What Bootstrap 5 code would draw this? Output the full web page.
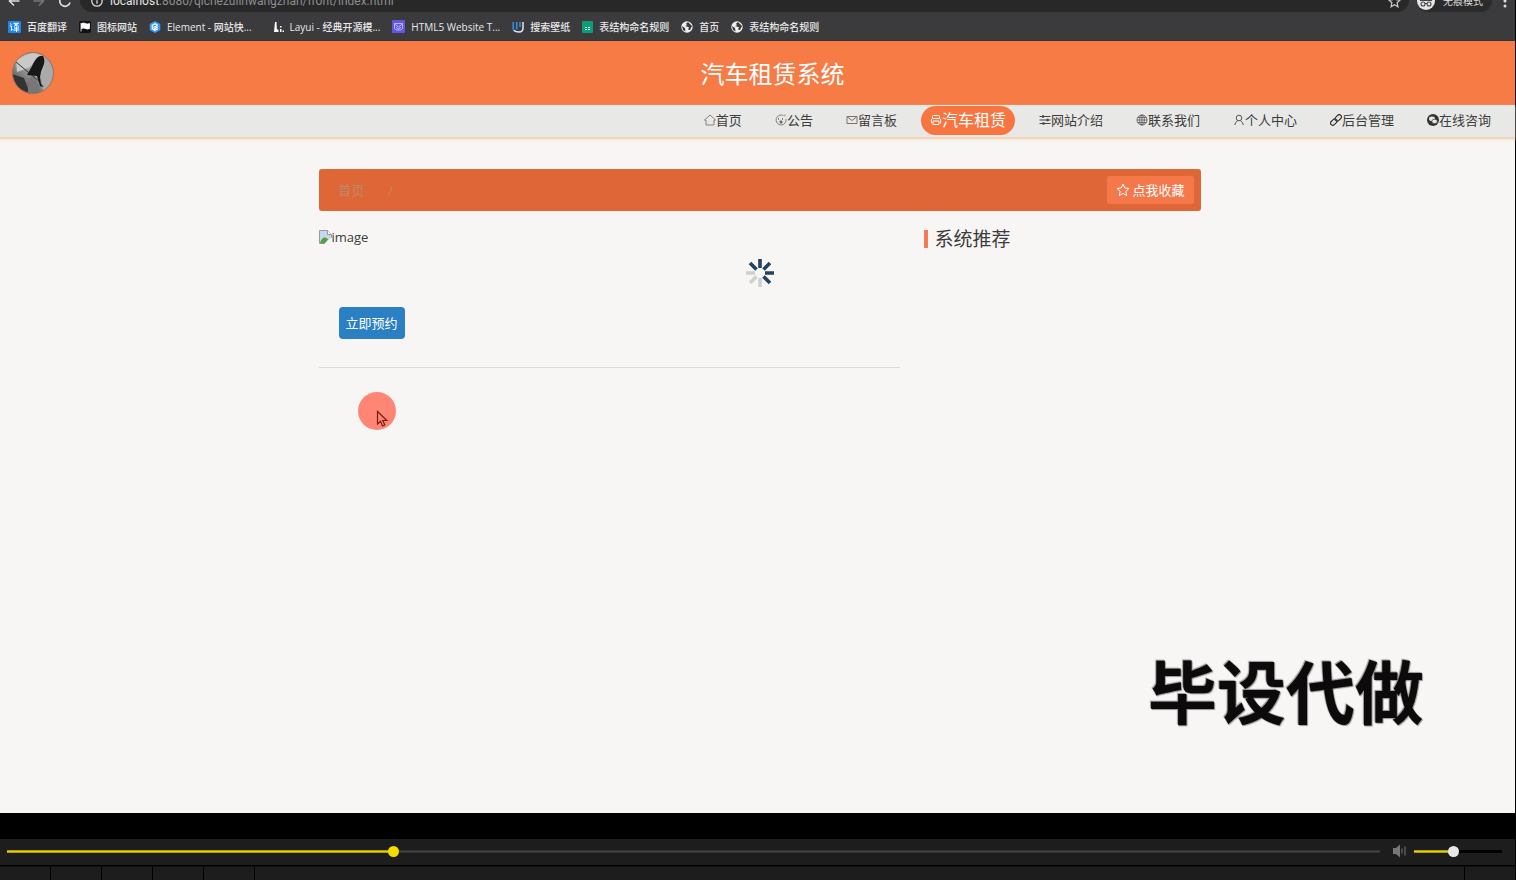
<!DOCTYPE html>
<html lang="zh-CN">
<head>
<meta charset="utf-8">
<meta name="viewport" content="width=device-width, initial-scale=1">
<title>汽车租赁系统</title>
<link href="https://cdn.jsdelivr.net/npm/bootstrap@5.3.0/dist/css/bootstrap.min.css" rel="stylesheet">
<style>
  body { font-family: "Open Sans", "Noto Sans CJK SC", sans-serif; font-size: 13px; line-height: 20px; background: #000; color: #3c3c3c; overflow: hidden; }
  a { color: inherit; text-decoration: none; }
  svg { display: block; flex: none; }
  button { font-family: inherit; }
  .screen { background: #f7f6f4; border-right: 1px solid #000; min-height: 0; }

  /* browser chrome */
  .toolbar { height: 12px; background: #3b3b3d; overflow: hidden; color: #dcdcdc; }
  .toolbar-row { height: 22px; flex: 1 1 auto; padding-left: 8px; }
  .toolbar-keys { gap: 13px; }
  .toolbar button { border: 0; padding: 0; background: none; color: inherit; }
  .toolbar .menu-key { margin: 0 8px 0 11px; }
  .address { background: #282829; border-radius: 0 0 12px 12px; padding: 0 8px 0 11px; height: 22px; font-family: Roboto, sans-serif; font-size: 12px; }
  .address input { background: none; border: 0; outline: 0; padding: 0; color: #8d8d8f; }
  .address-host { color: #e6e6e6; margin-left: 7px; }
  .incognito { background: #2b2b2c; border-radius: 11px; height: 22px; font-size: 10px; padding-right: 9px; }
  .bookmarks { height: 29px; background: #3b3b3d; border-bottom: 1px solid #333; color: #e8e8e8; font-size: 10px; font-weight: 500; padding: 1px 0 0 8px; gap: 12px; }
  .bookmarks a { gap: 6px; }

  /* site header */
  .site-head { height: 64px; background: #f67b45; padding-left: 12px; }
  .site-title { font-size: 24px; line-height: 32px; color: #fff; font-weight: 400; padding-top: 2px; }
  .site-nav { height: 34px; background: #e8e9e7; border-bottom: 2px solid #f2d4b7; padding: 0 15px 2px 0; gap: 15px; box-shadow: 0 1px 2px #f5e8da; }
  .site-nav a { padding: 0 9px; height: 29px; }
  .site-nav a.active { background: #f67540; color: #fff; font-size: 16px; border-radius: 15px; }

  /* content */
  .site-main { padding: 30px 0 0 4px; }
  .site-wrap { max-width: 882px; }
  .crumbs { background: #df6637; border-radius: 3px; padding: 0 7px 0 20px; height: 42px; color: #bc8a66; }
  .btn-fav { background: #f4784a; color: #fff; font-size: 13px; line-height: 20px; padding: 4px 9px; border-radius: 2px; border: 0; gap: 2px; }
  .main-col { flex: 0 0 581px; max-width: 581px; border-bottom: 1px solid #dcdcda; padding-bottom: 28px; }
  .alt-pic { font-size: 13px; }
  .btn-book { background: #2a80c2; color: #fff; font-size: 13px; line-height: 20px; padding: 6px 7px; border-radius: 4px; border: 0; margin: 60px 0 0 20px; }
  .side-title { font-size: 19px; line-height: 20px; font-weight: 400; padding-top: 2px; }
  .side-title::before { content: ""; width: 4px; height: 18px; background: #f67b50; margin-right: 7px; }

  /* things floating over the page */
  .loader { left: 50%; top: 259px; margin-left: -12px; }
  .pointer { left: 358px; top: 392px; width: 38px; height: 38px; background: #ff8575; border-radius: 50%; }
  .pointer svg { margin: 18px 0 0 18px; }
  .watermark { right: 91px; bottom: 71px; font-size: 69px; line-height: 100px; font-weight: 700; color: #0c0a0a; text-shadow: 0 0 1px #777, 1px 1px 1px #999, -1px -1px 1px #999; }

  /* player */
  .player { margin-top: 26px; height: 27px; background: #1d1d1d; border-right: 1px solid #000; border-bottom: 1px solid #000; padding: 0 13px 2px 7px; }
  .track { -webkit-appearance: none; appearance: none; height: 12px; margin: 0; background: none; display: block; min-width: 0; }
  .track::-webkit-slider-runnable-track { height: 3px; background: linear-gradient(#0004 1px, transparent 1px 2px, #0004 2px), linear-gradient(90deg, #ebd400 var(--done), var(--rest) var(--done)); }
  .track::-webkit-slider-thumb { -webkit-appearance: none; width: 11px; height: 11px; margin-top: -4px; border-radius: 50%; background: var(--knob); }
  .track-seek { --rest: #444; --knob: #f5dc00; }
  .track-volume { --rest: #000; --knob: #e8e8e8; width: 88px; }
  .shelf { height: 14px; background: #1d1d1d; border-top: 1px solid #111; border-right: 1px solid #000; }
  .shelf-cell { width: 51px; border-right: 1px solid #000; }
  .shelf-end { width: 51px; border-left: 1px solid #000; }
</style>
<script src="https://cdn.jsdelivr.net/npm/bootstrap@5.3.0/dist/js/bootstrap.bundle.min.js"></script>
</head>
<body class="d-flex flex-column vh-100">
<div class="screen position-relative flex-fill d-flex flex-column">

  <div class="toolbar d-flex align-items-end">
    <div class="toolbar-row d-flex align-items-center">
      <div class="toolbar-keys d-flex">
        <button type="button" aria-label="后退"><svg width="12" height="12" viewBox="0 0 12 12" fill="none" stroke="currentColor" stroke-width="1.6"><path d="M11.500 6H1.500M6 1.500L1.500 6 6 10.500"/></svg></button>
        <button type="button" aria-label="前进"><svg width="12" height="12" viewBox="0 0 12 12" fill="none" stroke="#777" stroke-width="1.600"><path d="M.5 6h10M6 1.500L10.500 6 6 10.500"/></svg></button>
        <button type="button" aria-label="刷新"><svg width="14" height="14" viewBox="0 0 14 14" fill="none" stroke="currentColor" stroke-width="1.700"><path d="M12 8.500A5.200 5.200 0 1 1 10.500 3.200"/><path d="M12.500 1v4h-4"/></svg></button>
      </div>
      <div class="address d-flex align-items-center flex-fill ms-2">
        <svg width="12" height="12" viewBox="0 0 12 12" fill="none" stroke="#ddd" stroke-width="1.300"><circle cx="6" cy="6" r="5.200"/><path d="M6 5.300v3.500M6 2.800v1.300"/></svg>
        <span class="address-host">localhost</span><input class="flex-fill" type="text" aria-label="地址" value=":8080/qichezulinwangzhan/front/index.html">
        <svg width="13" height="13" viewBox="0 0 14 14" fill="none" stroke="#ccc" stroke-width="1.300"><path d="M7 1l1.800 4 4.200.4-3.200 2.900.9 4.300L7 10.400l-3.700 2.200.9-4.300L1 5.400 5.200 5z"/></svg>
      </div>
      <div class="incognito d-flex align-items-center gap-2 ms-2">
        <svg width="18" height="18" viewBox="0 0 18 18"><circle cx="9" cy="9" r="9" fill="#e6e6e6"/><path d="M3 8.500h12M5.500 8l1-4h5l1 4" fill="#444" stroke="#444"/><g fill="none" stroke="#444" stroke-width="1.100"><circle cx="6" cy="12" r="2"/><circle cx="12" cy="12" r="2"/><path d="M8 11.500h2"/></g></svg>
        <span>无痕模式</span>
      </div>
      <button type="button" class="menu-key" aria-label="菜单"><svg width="4" height="14" viewBox="0 0 4 14" fill="#ddd"><circle cx="2" cy="2" r="1.500"/><circle cx="2" cy="7" r="1.500"/><circle cx="2" cy="12" r="1.500"/></svg></button>
    </div>
  </div>

  <nav class="bookmarks d-flex align-items-center text-nowrap" aria-label="书签">
    <a href="#" class="d-flex align-items-center"><svg width="13" height="12" viewBox="0 0 13 12"><rect width="13" height="12" rx="1" fill="#1d86f0"/><path d="M2 2.500l1.500 1M1.800 5h1.700v4.500l1.200-1M5.500 2.300h5L6 5.500M6.500 3l4.300 2.500M6 7h5M5.300 9h6M8.500 5.500V11" stroke="#fff" fill="none"/></svg>百度翻译</a>
    <a href="#" class="d-flex align-items-center"><svg width="12" height="12" viewBox="0 0 12 12"><rect width="12" height="12" rx="2" fill="#111"/><path d="M2 2v8.500M2.500 2.500q2-1 4 0t4 0v5q-2 1-4 0t-4 0z" fill="#fff" stroke="#fff" stroke-width=".8"/></svg>图标网站</a>
    <a href="#" class="d-flex align-items-center"><svg width="12" height="12" viewBox="0 0 12 12"><path d="M6 0l5.300 3v6L6 12 .7 9V3z" fill="#369cf5"/><path d="M8.700 4.300L6 2.700 3.300 4.300v3.500L6 9.300l2.700-1.500M4.500 6.500l4-2M5 8l3.700-2" stroke="#fff" fill="none" stroke-width="1.200"/></svg>Element - 网站快...</a>
    <a href="#" class="d-flex align-items-center ms-2"><svg width="12" height="12" viewBox="0 0 12 12" fill="#fff"><path d="M3 1h1.500l.3 7 1.700 1v2H2zM8 5h1.500v1.500H8zM8 8h1.500v3H8zM10.500 9.500H12V11h-1.500z"/></svg>Layui - 经典开源模...</a>
    <a href="#" class="d-flex align-items-center"><svg width="13" height="13" viewBox="0 0 13 13"><rect width="13" height="13" rx="1" fill="#6358dc"/><path d="M2.500 3.500h8v5l-2 1.500h-4l-2-1.500zM2.500 4l4 3 4-3M4 7.500l2.500 1.300L9 7.500" fill="none" stroke="#b9b4ff"/></svg>HTML5 Website T...</a>
    <a href="#" class="d-flex align-items-center"><svg width="12" height="12" viewBox="0 0 12 12" fill="none"><path d="M1.200 1v6q0 3.500 3.300 3.500M4.700 1v7.500M8 1v5" stroke="#398bdd" stroke-width="1.600"/><path d="M11 1v6q0 4-4 4-3 0-5-1.500" stroke="#dceaff" stroke-width="1.500"/></svg>搜索壁纸</a>
    <a href="#" class="d-flex align-items-center"><svg width="11" height="12" viewBox="0 0 11 12"><rect width="11" height="12" rx="1" fill="#0d9d79"/><path d="M3 6h2v1H3zM6 6h2v1H6zM3 8h2v1H3zM6 8h2v1H6z" fill="#d3fff0"/></svg>表结构命名规则</a>
    <a href="#" class="d-flex align-items-center"><svg width="12" height="12" viewBox="0 0 12 12"><circle cx="6" cy="6" r="5.700" fill="#f0f0f0"/><path d="M7 1L5 2.700 6 4.300 4 5l4 1.200-1 2.300 2 .5L11 5 9 3zM1 5l3 2 .5 3.500L2 9z" fill="#3b3b3d"/></svg>首页</a>
    <a href="#" class="d-flex align-items-center"><svg width="12" height="12" viewBox="0 0 12 12"><circle cx="6" cy="6" r="5.700" fill="#f0f0f0"/><path d="M7 1L5 2.700 6 4.300 4 5l4 1.200-1 2.300 2 .5L11 5 9 3zM1 5l3 2 .5 3.500L2 9z" fill="#3b3b3d"/></svg>表结构命名规则</a>
  </nav>

  <header>
    <div class="site-head d-flex align-items-center">
      <svg width="42" height="42" viewBox="0 0 42 42" role="img" aria-label="头像">
        <defs><clipPath id="face"><circle cx="21" cy="21" r="20.500"/></clipPath><linearGradient id="tone" x1="0" y1="1" x2=".8" y2="0"><stop offset="0" stop-color="#222"/><stop offset=".35" stop-color="#777"/><stop offset=".7" stop-color="#bbb"/><stop offset="1" stop-color="#999"/></linearGradient></defs>
        <g clip-path="url(#face)"><rect width="42" height="42" fill="url(#tone)"/><path d="M4 8L22 0l8 4-14 12L5 20z" fill="#c9c9c7"/><path d="M33 12l9 4v22H31L29 24z" fill="#aaa"/><path d="M0 22l12 4 6 16H4z" fill="#333"/><path d="M16 27l6-4 6 13-6 6h-6z" fill="#777"/><path d="M4 10l24 20" stroke="#333"/><path d="M31 4q2 3 1 8l-3 8-1 5 1 7 3 3-4-1-3-10-10-1 5-9Q24 5 28 4z" fill="#171717"/></g>
        <circle cx="21" cy="21" r="20.500" fill="none" stroke="#96705f"/>
      </svg>
      <h1 class="site-title flex-fill text-center m-0 pe-4">汽车租赁系统</h1>
    </div>
    <nav class="site-nav d-flex align-items-center justify-content-end text-nowrap" aria-label="主导航">
      <a href="#" class="d-flex align-items-center"><svg width="12" height="12" viewBox="0 0 12 12" fill="none" stroke="#777" stroke-width=".9"><path d="M.5 6L6 1l5.500 5H10v5H2V6z"/></svg>首页</a>
      <a href="#" class="d-flex align-items-center"><svg width="12" height="12" viewBox="0 0 12 12" fill="none" stroke="#777" stroke-width=".9"><path d="M8.500 1.600A5 5 0 1 0 11 5"/><path d="M10 .5v1.800"/><circle cx="6" cy="8" r="1.200" fill="#555"/><path d="M3.500 4.300v1.400M7.500 4.300v1.400" stroke="#444"/></svg>公告</a>
      <a href="#" class="d-flex align-items-center"><svg width="12" height="12" viewBox="0 0 12 12" fill="none" stroke="#666" stroke-width=".9"><path d="M1 2.500h10v7H1zM1.500 3L6 6.500 10.500 3"/></svg>留言板</a>
      <a href="#" class="d-flex align-items-center active" aria-current="page"><svg width="12" height="12" viewBox="0 0 12 12" fill="none" stroke="#fff"><path d="M2.500 4V2.500q0-1 1-1h5q1 0 1 1V4M2.500 9h-1q-1-4 1-4.500h7q2 .5 1 4.500h-1M3 7h6v3.500H3z"/></svg>汽车租赁</a>
      <a href="#" class="d-flex align-items-center"><svg width="12" height="12" viewBox="0 0 12 12" fill="none" stroke="#444"><path d="M.5 2.500h11M.5 6h11M.5 9.500h11"/><path d="M4 1.300v2.400M8.500 4.800v2.400M4.500 8.300v2.400" stroke-width="2"/></svg>网站介绍</a>
      <a href="#" class="d-flex align-items-center"><svg width="12" height="12" viewBox="0 0 12 12" fill="none" stroke="#555" stroke-width=".8"><circle cx="6" cy="6" r="5"/><ellipse cx="6" cy="6" rx="2.300" ry="5"/><path d="M1 6h10M6 1v10M1.700 3.500h8.600M1.700 8.500h8.600"/></svg>联系我们</a>
      <a href="#" class="d-flex align-items-center"><svg width="12" height="12" viewBox="0 0 12 12" fill="none" stroke="#555"><circle cx="6" cy="4" r="2.800"/><path d="M1.800 11q.2-3 3-4.300M7.500 6.700Q10 8 10.300 11"/></svg>个人中心</a>
      <a href="#" class="d-flex align-items-center"><svg width="12" height="12" viewBox="0 0 12 12" fill="none" stroke="#333" stroke-width="1.200"><rect x="4.600" y="1.700" width="7.200" height="4.400" rx="2.200" transform="rotate(-45 8.200 3.900)"/><rect x=".2" y="5.900" width="7.200" height="4.400" rx="2.200" transform="rotate(-45 3.800 8.100)"/></svg>后台管理</a>
      <a href="#" class="d-flex align-items-center"><svg width="12" height="12" viewBox="0 0 12 12"><circle cx="6" cy="6" r="6" fill="#333"/><ellipse cx="5" cy="4.800" rx="3" ry="2.300" fill="#e8e9e7"/><ellipse cx="7.600" cy="7.400" rx="2.800" ry="2.200" fill="#e8e9e7" stroke="#333" stroke-width=".7"/></svg>在线咨询</a>
    </nav>
  </header>

  <main class="site-main flex-fill">
    <div class="site-wrap mx-auto">
      <div class="crumbs d-flex align-items-center justify-content-between">
        <div class="d-flex"><a href="#">首页</a><span class="ms-4">/</span></div>
        <button type="button" class="btn btn-fav d-flex align-items-center"><svg width="14" height="14" viewBox="0 0 14 14" fill="none" stroke="#fff"><path d="M7 1l1.800 4 4.200.4-3.200 2.900.9 4.300L7 10.400l-3.700 2.200.9-4.300L1 5.400 5.200 5z"/></svg>点我收藏</button>
      </div>
      <div class="d-flex justify-content-start gap-4 align-items-start mt-3">
        <section class="main-col">
          <div class="alt-pic d-flex align-items-center"><svg width="13" height="15" viewBox="0 0 13 15"><path d="M.5.500h8l4 4v4L7 13.500H.5z" fill="#c8d7f0" stroke="#999"/><path d="M8.500.5v4h4" fill="#fff" stroke="#999"/><path d="M1 13q2-6 5-5.500t3 2L6 13z" fill="#55a03f"/><path d="M13 8L6 14.500" stroke="#fff" stroke-width="1.500"/></svg>image</div>
          <button type="button" class="btn btn-book">立即预约</button>
        </section>
        <aside><h2 class="side-title d-flex align-items-center m-0 text-nowrap">系统推荐</h2></aside>
      </div>
    </div>
  </main>

  <div class="loader position-absolute" role="status" aria-label="加载中">
    <svg width="28" height="28" viewBox="-14 -14 28 28" stroke="#23435f" stroke-width="3.600"><path d="M0-5V-14M3.500-3.500L10-10M5 0H14M3.500 3.500L10 10M-3.500-3.500L-10-10"/><path d="M0 5V14M-3.500 3.500L-10 10M-5 0H-14" stroke="#cdd1d4"/></svg>
  </div>
  <div class="pointer position-absolute"><svg width="12" height="18" viewBox="0 0 12 18"><path d="M1.500 1.500v12.500l3-2.700 2 4.700 2.300-1-2-4.500h4z" fill="#ff8575" stroke="#7a1c14" stroke-width="1.200"/></svg></div>
  <div class="watermark position-absolute text-nowrap">毕设代做</div>
</div>

<div class="player d-flex align-items-center">
  <input class="track track-seek flex-fill" type="range" min="0" max="100" value="28" aria-label="播放进度" style="--done:28%">
  <svg class="mx-2" width="18" height="14" viewBox="0 0 18 14" fill="#777"><path d="M5 4h3l4-3.500v13L8 10H5z"/><path d="M13.500 4.500h1v5h-1zM16.500 2.500h1v9h-1z"/></svg>
  <input class="track track-volume" type="range" min="0" max="100" value="44" aria-label="音量" style="--done:44%">
</div>
<div class="shelf d-flex">
  <div class="shelf-cell"></div><div class="shelf-cell"></div><div class="shelf-cell"></div><div class="shelf-cell"></div><div class="shelf-cell"></div>
  <div class="shelf-end ms-auto"></div>
</div>
</body>
</html>
